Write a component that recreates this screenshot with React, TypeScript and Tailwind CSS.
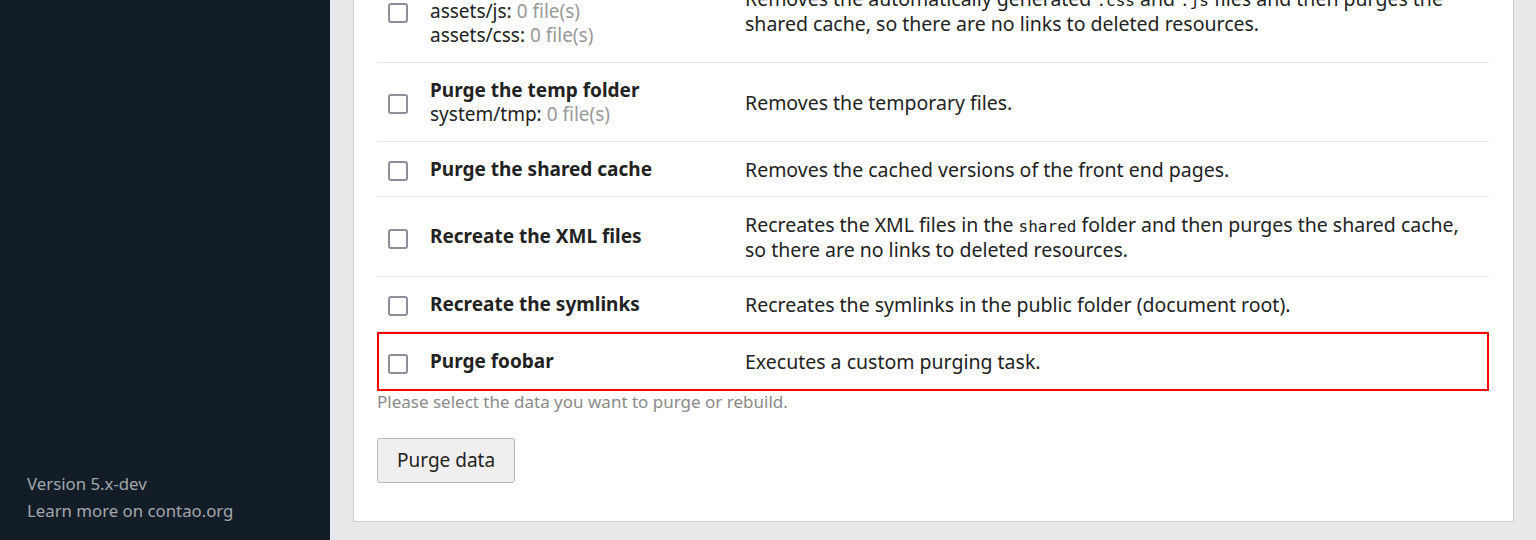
import React from "react";

type PurgeRow = {
  id: string;
  title: string;
  folders?: { path: string; count: number }[];
  description: React.ReactNode;
  highlight?: boolean;
};

const Code = ({ children }: { children: React.ReactNode }) => (
  <code className="font-['DejaVu_Sans_Mono','Liberation_Mono',monospace] text-[16px] leading-none">
    {children}
  </code>
);

const rows: PurgeRow[] = [
  {
    id: "scripts",
    title: "Purge the script cache",
    folders: [
      { path: "assets/js", count: 0 },
      { path: "assets/css", count: 0 },
    ],
    description: (
      <>
        Removes the automatically generated <Code>.css</Code> and <Code>.js</Code> files and then purges the
        <br />
        shared cache, so there are no links to deleted resources.
      </>
    ),
  },
  {
    id: "temp",
    title: "Purge the temp folder",
    folders: [{ path: "system/tmp", count: 0 }],
    description: "Removes the temporary files.",
  },
  {
    id: "shared",
    title: "Purge the shared cache",
    description: "Removes the cached versions of the front end pages.",
  },
  {
    id: "xml",
    title: "Recreate the XML files",
    description: (
      <>
        Recreates the XML files in the <Code>shared</Code> folder and then purges the shared cache,
        <br />
        so there are no links to deleted resources.
      </>
    ),
  },
  {
    id: "symlinks",
    title: "Recreate the symlinks",
    description: "Recreates the symlinks in the public folder (document root).",
  },
  {
    id: "foobar",
    title: "Purge foobar",
    description: "Executes a custom purging task.",
    highlight: true,
  },
];

function Row({ row }: { row: PurgeRow }) {
  // the highlighted row carries a 2px red frame, so its first column is 2px narrower
  return (
    <div
      className={
        row.highlight
          ? "grid grid-cols-[41px_315px_1fr] items-center border-2 border-[#f00] py-[0.5px]"
          : "grid grid-cols-[43px_315px_1fr] items-center border-b border-[#e6e6e6]"
      }
    >
      <div className={row.highlight ? "pl-[9px] py-[14.5px] flex" : "pl-[11px] py-[14.5px] flex"}>
        <input
          type="checkbox"
          className="appearance-none mt-1 w-5 h-5 rounded-[3px] border-2 border-[#8f8d9c] bg-white"
        />
      </div>
      <div className="pl-[10px] py-[14.5px] leading-[24.5px] text-[19px]">
        <div className="font-bold">{row.title}</div>
        {row.folders?.map((f) => (
          <div key={f.path}>
            {f.path}: <span className="text-[#999]">{f.count} file(s)</span>
          </div>
        ))}
      </div>
      <div className="pl-[10px] pr-2 py-[14.5px] leading-[25px] text-[19.5px]">{row.description}</div>
    </div>
  );
}

export default function App() {
  return (
    <div className="flex h-[540px] overflow-hidden font-['Noto_Sans','Open_Sans',sans-serif] text-[#222]">
      <aside className="w-[330px] shrink-0 bg-[#121d27] flex flex-col justify-end px-[27px] pb-[16px] text-[16.8px] leading-[27px] text-[#a3a7ac]">
        <p>Version 5.x-dev</p>
        <p>Learn more on contao.org</p>
      </aside>

      <main className="flex-1 bg-[#e9e9eb] flex flex-col justify-end overflow-hidden pl-[23px] pr-[22px] pb-[18px]">
        <div className="shrink-0 bg-white border border-[#cdcdcd] pl-[23px] pr-[24px] pt-6 pb-[38px]">
          <div>
            {rows.map((r) => (
              <Row key={r.id} row={r} />
            ))}
          </div>
          <p className="mt-[2px] text-[17px] leading-[18px] text-[#8a8a8a]">
            Please select the data you want to purge or rebuild.
          </p>
          <button className="mt-[27px] h-[45px] px-[19px] bg-[#efefef] border border-[#b9b9b9] rounded-[3px] text-[19px] text-[#222]">
            Purge data
          </button>
        </div>
      </main>
    </div>
  );
}
